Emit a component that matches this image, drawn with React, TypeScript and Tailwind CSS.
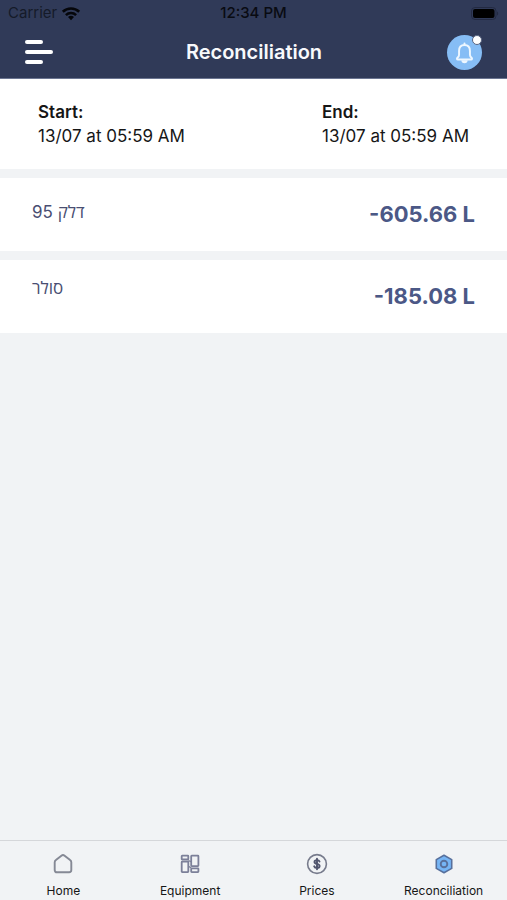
import React, { useState } from "react";

type Period = {
  label: string;
  value: string;
};

type Product = {
  id: number;
  name: string;
  amount: string;
  mixed: boolean;
};

type Tab = {
  name: string;
  icon: React.ReactNode;
};

const periods: Period[] = [
  { label: "Start:", value: "13/07 at 05:59 AM" },
  { label: "End:", value: "13/07 at 05:59 AM" },
];

const products: Product[] = [
  { id: 1, name: "דלק 95", amount: "-605.66 L", mixed: true },
  { id: 2, name: "סולר", amount: "-185.08 L", mixed: false },
];

const HomeIcon = () => (
  <svg viewBox="0 0 20 20" className="size-5" fill="none" stroke="#858995" strokeWidth="1.9" strokeLinejoin="round">
    <path d="M1.7 8.3c0-1 .4-1.6 1.2-2.2L8.4 1.7c1-.8 2.2-.8 3.2 0l5.5 4.4c.8.6 1.2 1.2 1.2 2.2v7.8c0 1.4-.8 2.2-2.2 2.2H3.9c-1.4 0-2.2-.8-2.2-2.2z" />
  </svg>
);

const EquipmentIcon = () => (
  <svg viewBox="0 0 20 20" className="size-5" fill="none" stroke="#7c8099" strokeWidth="1.8" strokeLinejoin="round">
    <rect x="1.7" y="1.7" width="6.6" height="3.8" rx=".5" />
    <rect x="1.7" y="7.7" width="6.6" height="10.4" rx=".5" />
    <rect x="11.2" y="1.7" width="7.2" height="10.4" rx=".5" />
    <rect x="11.2" y="14.3" width="7.2" height="3.8" rx=".5" />
    <path d="M8.3 6.6l2.9 1M8.3 12.4l2.9 1.2" strokeWidth="1.2" />
  </svg>
);

const PricesIcon = () => (
  <svg viewBox="0 0 22 22" className="size-[22px]" fill="none" strokeLinecap="round">
    <circle cx="11" cy="11" r="9.4" stroke="#777b8c" strokeWidth="1.6" />
    <path
      d="M13.5 8.6c-.3-1-1.2-1.5-2.5-1.5-1.5 0-2.5.7-2.5 1.8 0 2.7 5.1 1.4 5.1 4.1 0 1.2-1 1.9-2.6 1.9-1.4 0-2.4-.6-2.8-1.6M11 5.8v10.4"
      stroke="#50546d"
      strokeWidth="1.9"
    />
  </svg>
);

const ReconciliationIcon = () => (
  <svg viewBox="0 0 20 20" className="size-5" stroke="#58709c" strokeLinejoin="round">
    <path d="M10 1.3l7.7 4.3v8.8L10 18.7l-7.7-4.3V5.6z" fill="#76b5f5" strokeWidth="1.6" />
    <circle cx="10" cy="10" r="3.3" fill="#76b5f5" strokeWidth="1.9" />
  </svg>
);

const tabs: Tab[] = [
  { name: "Home", icon: <HomeIcon /> },
  { name: "Equipment", icon: <EquipmentIcon /> },
  { name: "Prices", icon: <PricesIcon /> },
  { name: "Reconciliation", icon: <ReconciliationIcon /> },
];

const StatusBar: React.FC = () => (
  <div className="grid h-[27px] grid-cols-3 items-center px-2 text-[15px] text-[#090b12]">
    <div className="flex items-center gap-1">
      <span className="text-[#151a29]">Carrier</span>
      <svg viewBox="0 0 20 15" className="h-[15px] w-5" fill="none" stroke="#05060a" strokeWidth="2.6">
        <path d="M1.8 5.8a11.8 11.8 0 0 1 16.4 0M4.9 9.1a7.4 7.4 0 0 1 10.2 0" />
        <path d="M10 14.2l-3-3.1a4.3 4.3 0 0 1 6 0z" fill="#05060a" stroke="none" />
      </svg>
    </div>
    <span className="text-center font-medium">12:34 PM</span>
    <svg viewBox="0 0 28 13" className="h-[13px] w-7 justify-self-end">
      <rect x=".5" y=".5" width="24.5" height="12" rx="3.5" fill="none" stroke="#232a42" />
      <rect x="2" y="2" width="21.5" height="9" rx="2" fill="#000" />
      <path d="M26 4.5c1.6.6 1.6 3.4 0 4z" fill="#232a42" />
    </svg>
  </div>
);

const App: React.FC = () => {
  const [activeTab, setActiveTab] = useState("Reconciliation");

  return (
    <div className="flex min-h-screen flex-col bg-[#f1f3f5] font-['Inter',sans-serif] text-[#161616]">
      <header className="border-b border-[#6b7591] bg-[#303a58] pb-px">
        <StatusBar />
        <div className="flex h-[50px] items-center justify-between px-[25px]">
          <button type="button" aria-label="Menu" className="flex w-9 flex-col gap-[6px]">
            <span className="h-1 w-[18px] rounded-xs bg-white" />
            <span className="h-1 w-7 rounded-xs bg-white" />
            <span className="h-1 w-[18px] rounded-xs bg-white" />
          </button>
          <h1 className="text-xl font-semibold text-[#f8f9fc]">Reconciliation</h1>
          <button type="button" aria-label="Notifications" className="relative size-[35px] rounded-full bg-[#86bdf5]">
            <svg
              viewBox="0 0 36 36"
              className="size-[35px]"
              fill="none"
              stroke="#eef7ff"
              strokeWidth="2"
              strokeLinecap="round"
              strokeLinejoin="round"
            >
              <path d="M18 8.6v1.4M18 10.2c-3.8 0-5.6 2.8-5.6 6.2v3.8c0 1.6-.6 2.4-1.7 3.3-.8.7-.5 1.7.5 1.7h13.6c1 0 1.3-1 .5-1.7-1.1-.9-1.7-1.7-1.7-3.3v-3.8c0-3.4-1.8-6.2-5.6-6.2z" />
              <path d="M14.8 26a3.2 3 0 0 0 6.4 0z" fill="#eef7ff" stroke="none" />
            </svg>
            <span className="absolute top-0 right-0 size-[10px] rounded-full border border-[#596582] bg-white" />
          </button>
        </div>
      </header>

      <main className="flex flex-1 flex-col">
        <section className="flex h-[90px] items-center justify-between bg-white px-[38px]">
          {periods.map((period) => (
            <div key={period.label} className="text-[17px] leading-6">
              <p className="font-semibold">{period.label}</p>
              <p>{period.value}</p>
            </div>
          ))}
        </section>

        {/* Product totals */}
        <ul>
          {products.map((product) => (
            <li key={product.id} className="mt-[9px] flex h-[73px] justify-between bg-white px-8 text-[#494e72]">
              <span
                dir="rtl"
                className={`font-['Inter','Open_Sans',sans-serif] text-[17px] leading-6 ${
                  product.mixed ? "pt-[22px]" : "pt-4"
                }`}
              >
                {product.name}
              </span>
              <span className="self-center text-[22px] font-bold text-[#4b5886]">{product.amount}</span>
            </li>
          ))}
        </ul>
      </main>

      <nav className="grid h-[60px] grid-cols-4 border-t border-[#d5d7da]">
        {tabs.map((tab) => (
          <button
            key={tab.name}
            type="button"
            aria-current={activeTab === tab.name ? "page" : undefined}
            onClick={() => setActiveTab(tab.name)}
            className="flex flex-col items-center pt-3"
          >
            <span className="flex h-[22px] items-center">{tab.icon}</span>
            <span className="mt-2 text-xs leading-4">{tab.name}</span>
          </button>
        ))}
      </nav>
    </div>
  );
};

export default App;
